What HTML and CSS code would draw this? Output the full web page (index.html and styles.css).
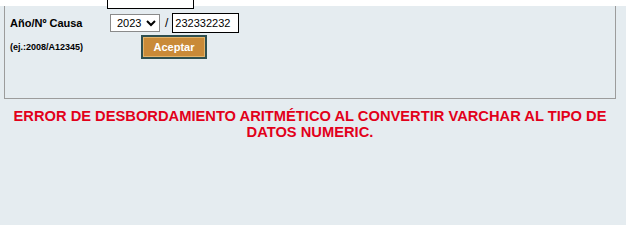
FILE: index.html
```html
<!DOCTYPE html>
<html lang="es">
<head>
  <meta charset="UTF-8" />
  <title>Consulta Causa</title>
  <link rel="stylesheet" href="styles.css">
</head>
<body>
  <div class="topbar">
    <div class="stub"></div>
  </div>
  <div class="frame">
    <div class="row">
      <label class="label" for="rol">Año/Nº Causa</label>
      <div class="fields">
        <select class="year" id="anio">
          <option>2023</option>
          <option>2022</option>
          <option>2021</option>
        </select>
        <span class="slash">/</span>
        <input type="text" class="rol" id="rol" value="232332232" />
      </div>
    </div>
    <div class="row row-hint">
      <span class="hint">(ej.:2008/A12345)</span>
      <button class="accept-btn">Aceptar</button>
    </div>
  </div>
  <div class="error">ERROR DE DESBORDAMIENTO ARITMÉTICO AL CONVERTIR VARCHAR AL TIPO DE DATOS NUMERIC.</div>
</body>
</html>
```

FILE: styles.css
```css
* {
  box-sizing: border-box;
}

body {
  margin: 0;
  background: #e5ecf0;
  font-family: "Liberation Sans", Arial, sans-serif;
  color: #000;
  height: 225px;
  overflow: hidden;
}

.topbar {
  height: 6px;
  background: #fff;
}

.stub {
  margin-left: 107px;
  width: 87px;
  height: 9px;
  background: #fff;
  border: 1px solid #000;
  border-top: none;
}

.frame {
  margin: 0 10px 0 4px;
  height: 93px;
  border: 1px solid #9c9c9c;
  border-top: none;
  padding-top: 7px;
}

.row {
  display: flex;
  align-items: center;
}

.label {
  width: 105px;
  padding-left: 5px;
  font-size: 11px;
  font-weight: bold;
}

.fields {
  display: flex;
  align-items: center;
}

.year {
  width: 50px;
  height: 18px;
  font-size: 11px;
  font-family: "Liberation Sans", Arial, sans-serif;
  background: #fff;
  color: #000;
  border: 1px solid #8a8a8a;
  border-radius: 0;
  padding: 0 0 0 2px;
}

.slash {
  font-size: 12px;
  margin: 0 4px 0 5px;
}

.rol {
  width: 67px;
  height: 20px;
  border: 1px solid #000;
  padding: 0 2px;
  font-size: 11px;
  font-family: "Liberation Sans", Arial, sans-serif;
}

.row-hint {
  margin-top: 2px;
}

.hint {
  width: 136px;
  padding-left: 5px;
  font-size: 9px;
  font-weight: bold;
}

.accept-btn {
  width: 66px;
  height: 24px;
  background: #c98a38;
  border: 2px solid #2f4f4f;
  box-shadow: inset 0 0 0 1px #e3b46a;
  color: #fff;
  font-family: "Liberation Sans", Arial, sans-serif;
  font-size: 11px;
  font-weight: bold;
  padding: 0;
  cursor: pointer;
}

.error {
  margin: 9px 10px 0 4px;
  text-align: center;
  color: #e2001a;
  font-size: 14.7px;
  font-weight: bold;
  line-height: 16px;
}
```
